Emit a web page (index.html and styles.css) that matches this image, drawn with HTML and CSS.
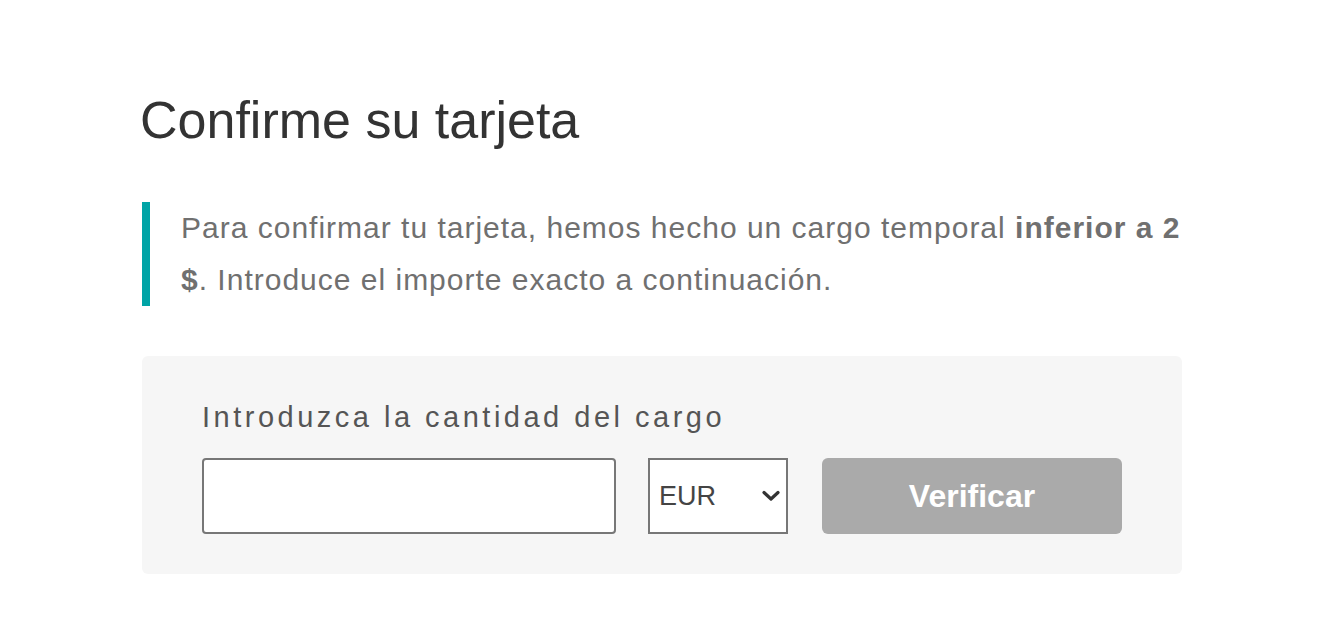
FILE: index.html
```html
<!DOCTYPE html>
<html lang="es">
<head>
<meta charset="utf-8">
<title>Confirme su tarjeta</title>
<link rel="stylesheet" href="styles.css">
</head>
<body>
<main class="page">
  <h1 class="title">Confirme su tarjeta</h1>
  <p class="notice">Para confirmar tu tarjeta, hemos hecho un cargo temporal <strong>inferior a 2 $</strong>. Introduce el importe exacto a continuación.</p>
  <form class="verify">
    <label class="verify-label" for="amount">Introduzca la cantidad del cargo</label>
    <div class="verify-row">
      <input class="amount-input" id="amount" type="text">
      <span class="currency">
        <select class="currency-select">
          <option>EUR</option>
        </select>
        <svg class="currency-chevron" width="18" height="12" viewBox="0 0 18 12" aria-hidden="true"><path d="M2 2.5 L9 9 L16 2.5" fill="none" stroke="#333" stroke-width="3.2" stroke-linecap="round" stroke-linejoin="round"/></svg>
      </span>
      <button class="verify-button" type="button">Verificar</button>
    </div>
  </form>
</main>
</body>
</html>
```

FILE: styles.css
```css
body {
  margin: 0;
  background: #ffffff;
  font-family: "Liberation Sans", Arial, sans-serif;
}

.page {
  width: 1042px;
  padding: 90px 0 0 140px;
}

.title {
  margin: 0;
  font-size: 52px;
  font-weight: 400;
  line-height: 60px;
  color: #333333;
}

.notice {
  margin: 52px 0 0 2px;
  width: 1040px;
  box-sizing: border-box;
  border-left: 8px solid #00a4a6;
  padding-left: 31px;
  font-size: 30px;
  letter-spacing: 1px;
  line-height: 52px;
  color: #707070;
}

.notice strong {
  font-weight: 700;
}

.verify {
  margin: 50px 0 0 2px;
  width: 1040px;
  box-sizing: border-box;
  background: #f6f6f6;
  border-radius: 6px;
  padding: 43px 60px 40px;
}

.verify-label {
  display: block;
  font-size: 29px;
  line-height: 36px;
  letter-spacing: 3.5px;
  color: #555555;
  margin-bottom: 23px;
}

.verify-row {
  display: flex;
  align-items: stretch;
  height: 76px;
}

.amount-input {
  width: 414px;
  box-sizing: border-box;
  border: 2px solid #777777;
  border-radius: 4px;
  background: #ffffff;
  margin: 0;
}

.currency {
  position: relative;
  margin-left: 32px;
  width: 140px;
}

.currency-select {
  appearance: none;
  -webkit-appearance: none;
  width: 100%;
  height: 100%;
  box-sizing: border-box;
  border: 2px solid #777777;
  border-radius: 0;
  background: #ffffff;
  padding: 0 0 0 9px;
  margin: 0;
  font-family: "Liberation Sans", Arial, sans-serif;
  font-size: 27px;
  color: #444444;
}

.currency-chevron {
  position: absolute;
  right: 8px;
  top: 32px;
  pointer-events: none;
}

.verify-button {
  margin-left: 34px;
  width: 300px;
  border: none;
  border-radius: 6px;
  background: #aaaaaa;
  color: #ffffff;
  font-family: "Liberation Sans", Arial, sans-serif;
  font-size: 32px;
  font-weight: 700;
}
```
